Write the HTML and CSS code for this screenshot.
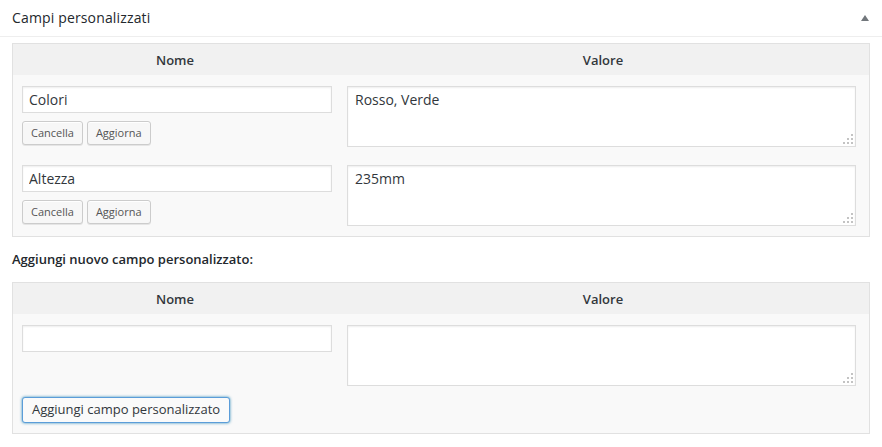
FILE: index.html
```html
<!DOCTYPE html>
<html lang="it">
<head>
<meta charset="utf-8">
<title>Campi personalizzati</title>
<link rel="stylesheet" href="styles.css">
</head>
<body>
<div class="postbox">
  <div class="postbox-header">
    <h3 class="postbox-title">Campi personalizzati</h3>
    <svg class="toggle" width="8" height="6" viewBox="0 0 8 6" aria-hidden="true"><polygon points="0,6 8,6 4,0" fill="#72777c"/></svg>
  </div>
  <div class="inside">
    <div class="meta-table">
      <div class="meta-head">
        <div class="th">Nome</div>
        <div class="th">Valore</div>
      </div>
      <div class="meta-body">
        <div class="meta-row">
          <div class="cell-key">
            <input class="text-input" type="text" value="Colori">
            <div class="actions">
              <button class="button button-small">Cancella</button>
              <button class="button button-small">Aggiorna</button>
            </div>
          </div>
          <div class="cell-value">
            <textarea class="text-area">Rosso, Verde</textarea>
            <svg class="grip" width="10" height="10" viewBox="0 0 10 10" aria-hidden="true"><g fill="#c3c3c3"><rect x="8" y="0" width="2" height="2"/><rect x="4" y="4" width="2" height="2"/><rect x="8" y="4" width="2" height="2"/><rect x="0" y="8" width="2" height="2"/><rect x="4" y="8" width="2" height="2"/><rect x="8" y="8" width="2" height="2"/></g></svg>
          </div>
        </div>
        <div class="meta-row">
          <div class="cell-key">
            <input class="text-input" type="text" value="Altezza">
            <div class="actions">
              <button class="button button-small">Cancella</button>
              <button class="button button-small">Aggiorna</button>
            </div>
          </div>
          <div class="cell-value">
            <textarea class="text-area">235mm</textarea>
            <svg class="grip" width="10" height="10" viewBox="0 0 10 10" aria-hidden="true"><g fill="#c3c3c3"><rect x="8" y="0" width="2" height="2"/><rect x="4" y="4" width="2" height="2"/><rect x="8" y="4" width="2" height="2"/><rect x="0" y="8" width="2" height="2"/><rect x="4" y="8" width="2" height="2"/><rect x="8" y="8" width="2" height="2"/></g></svg>
          </div>
        </div>
      </div>
    </div>

    <p class="add-label">Aggiungi nuovo campo personalizzato:</p>

    <div class="meta-table">
      <div class="meta-head">
        <div class="th">Nome</div>
        <div class="th">Valore</div>
      </div>
      <div class="meta-body new-body">
        <div class="meta-row">
          <div class="cell-key">
            <input class="text-input" type="text" value="">
          </div>
          <div class="cell-value">
            <textarea class="text-area"></textarea>
            <svg class="grip" width="10" height="10" viewBox="0 0 10 10" aria-hidden="true"><g fill="#c3c3c3"><rect x="8" y="0" width="2" height="2"/><rect x="4" y="4" width="2" height="2"/><rect x="8" y="4" width="2" height="2"/><rect x="0" y="8" width="2" height="2"/><rect x="4" y="8" width="2" height="2"/><rect x="8" y="8" width="2" height="2"/></g></svg>
          </div>
        </div>
        <div class="submit-row">
          <button class="button button-focus">Aggiungi campo personalizzato</button>
        </div>
      </div>
    </div>
  </div>
</div>
</body>
</html>
```

FILE: styles.css
```css
* { box-sizing: border-box; }

html, body {
  margin: 0;
  padding: 0;
  background: #fff;
  font-family: "Open Sans", "Liberation Sans", sans-serif;
  color: #444;
  font-size: 13px;
}

.postbox-header {
  display: flex;
  align-items: center;
  justify-content: space-between;
  height: 37px;
  padding: 0 13px 1px 12px;
  border-bottom: 1px solid #eee;
}

.postbox-title {
  margin: 0;
  font-size: 14px;
  font-weight: 400;
  color: #23282d;
  line-height: 20px;
  letter-spacing: 0.15px;
}

.toggle { display: block; }

.inside {
  padding: 6px 12px 0 12px;
}

.meta-table {
  border: 1px solid #e1e1e1;
  background: #f9f9f9;
}

.meta-head {
  display: grid;
  grid-template-columns: 324px 1fr;
  background: #f1f1f1;
  height: 31px;
  align-items: center;
}

.th {
  text-align: center;
  font-weight: 600;
  font-size: 13px;
  color: #32373c;
}

.meta-body {
  display: flex;
  flex-direction: column;
  gap: 18px;
  padding: 11px 0 10px;
}

.new-body { gap: 11px; }

.meta-row {
  display: grid;
  grid-template-columns: 324px 1fr;
}

.cell-key {
  padding-left: 9px;
  display: flex;
  flex-direction: column;
  gap: 8px;
}

.cell-value {
  position: relative;
  padding: 0 13px 0 10px;
}

.text-input {
  width: 310px;
  height: 27px;
  margin: 0;
  padding: 2px 6px;
  border: 1px solid #ddd;
  box-shadow: inset 0 1px 2px rgba(0,0,0,.07);
  background: #fff;
  color: #32373c;
  font-family: "Open Sans", "Liberation Sans", sans-serif;
  font-size: 14px;
  outline: none;
}

.text-area {
  display: block;
  width: 100%;
  height: 61px;
  margin: 0;
  padding: 3px 7px;
  border: 1px solid #ddd;
  box-shadow: inset 0 1px 2px rgba(0,0,0,.07);
  background: #fff;
  color: #32373c;
  font-family: "Open Sans", "Liberation Sans", sans-serif;
  font-size: 14px;
  line-height: 20px;
  resize: none;
  outline: none;
}

.grip {
  position: absolute;
  right: 16px;
  bottom: 3px;
}

.actions {
  display: flex;
  gap: 4px;
}

.button {
  display: inline-block;
  margin: 0;
  font-family: "Open Sans", "Liberation Sans", sans-serif;
  color: #555;
  background: #f7f7f7;
  border: 1px solid #ccc;
  border-radius: 3px;
  box-shadow: inset 0 1px 0 #fff, 0 1px 0 rgba(0,0,0,.08);
  cursor: pointer;
  white-space: nowrap;
}

.button-small {
  height: 24px;
  line-height: 21px;
  padding: 0 8px 1px;
  font-size: 11px;
}

.submit-row {
  padding-left: 9px;
}

.button-focus {
  height: 26px;
  line-height: 23px;
  padding: 0 9px 1px;
  font-size: 13px;
  color: #32373c;
  background: #fafafa;
  border-color: #5b9dd9;
  box-shadow: 0 0 3px rgba(0,115,170,.8);
}

.add-label {
  margin: 0;
  padding: 13px 0 14px;
  line-height: 18px;
  font-size: 13px;
  font-weight: 600;
  color: #23282d;
}
```
